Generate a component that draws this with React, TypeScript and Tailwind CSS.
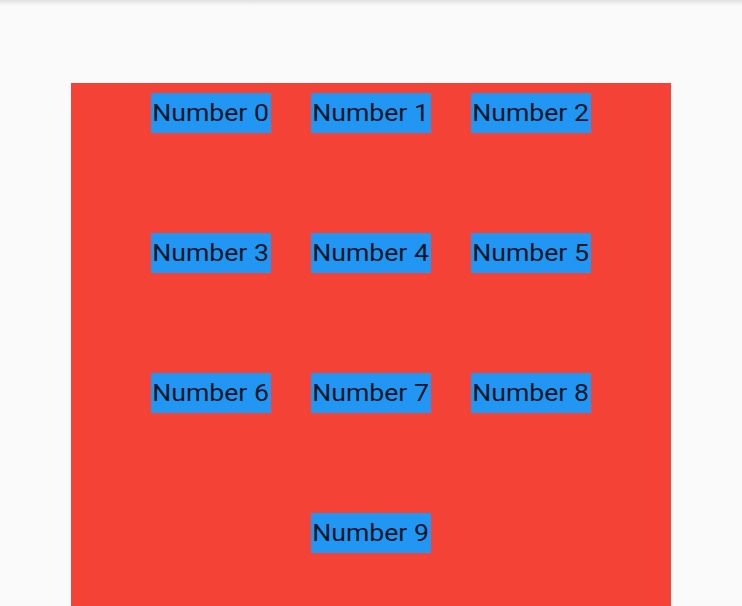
import React from "react";

export default function App() {
  const items = Array.from({ length: 10 }, (_, i) => i);
  return (
    <div className="relative h-[606px] w-full overflow-hidden bg-[#fafafa]" style={{ fontFamily: "Roboto, 'Liberation Sans', sans-serif" }}>
      <div className="absolute left-0 right-0 top-0 h-[6px] bg-gradient-to-b from-black/10 to-transparent" />
      <div className="mx-auto mt-[83px] h-[600px] w-[600px] bg-[#f44336] pt-[10px]">
        <div className="mx-auto flex w-[440px] flex-wrap justify-center gap-x-[40px] gap-y-[100px]">
          {items.map((i) => (
            <div key={i} className="flex h-[40px] w-[120px] items-center justify-center overflow-hidden whitespace-nowrap bg-[#2196f3] text-[24px] leading-none text-black/[0.87]">
              <span className="inline-block scale-x-[1.11]">Number {i}</span>
            </div>
          ))}
        </div>
      </div>
    </div>
  );
}
